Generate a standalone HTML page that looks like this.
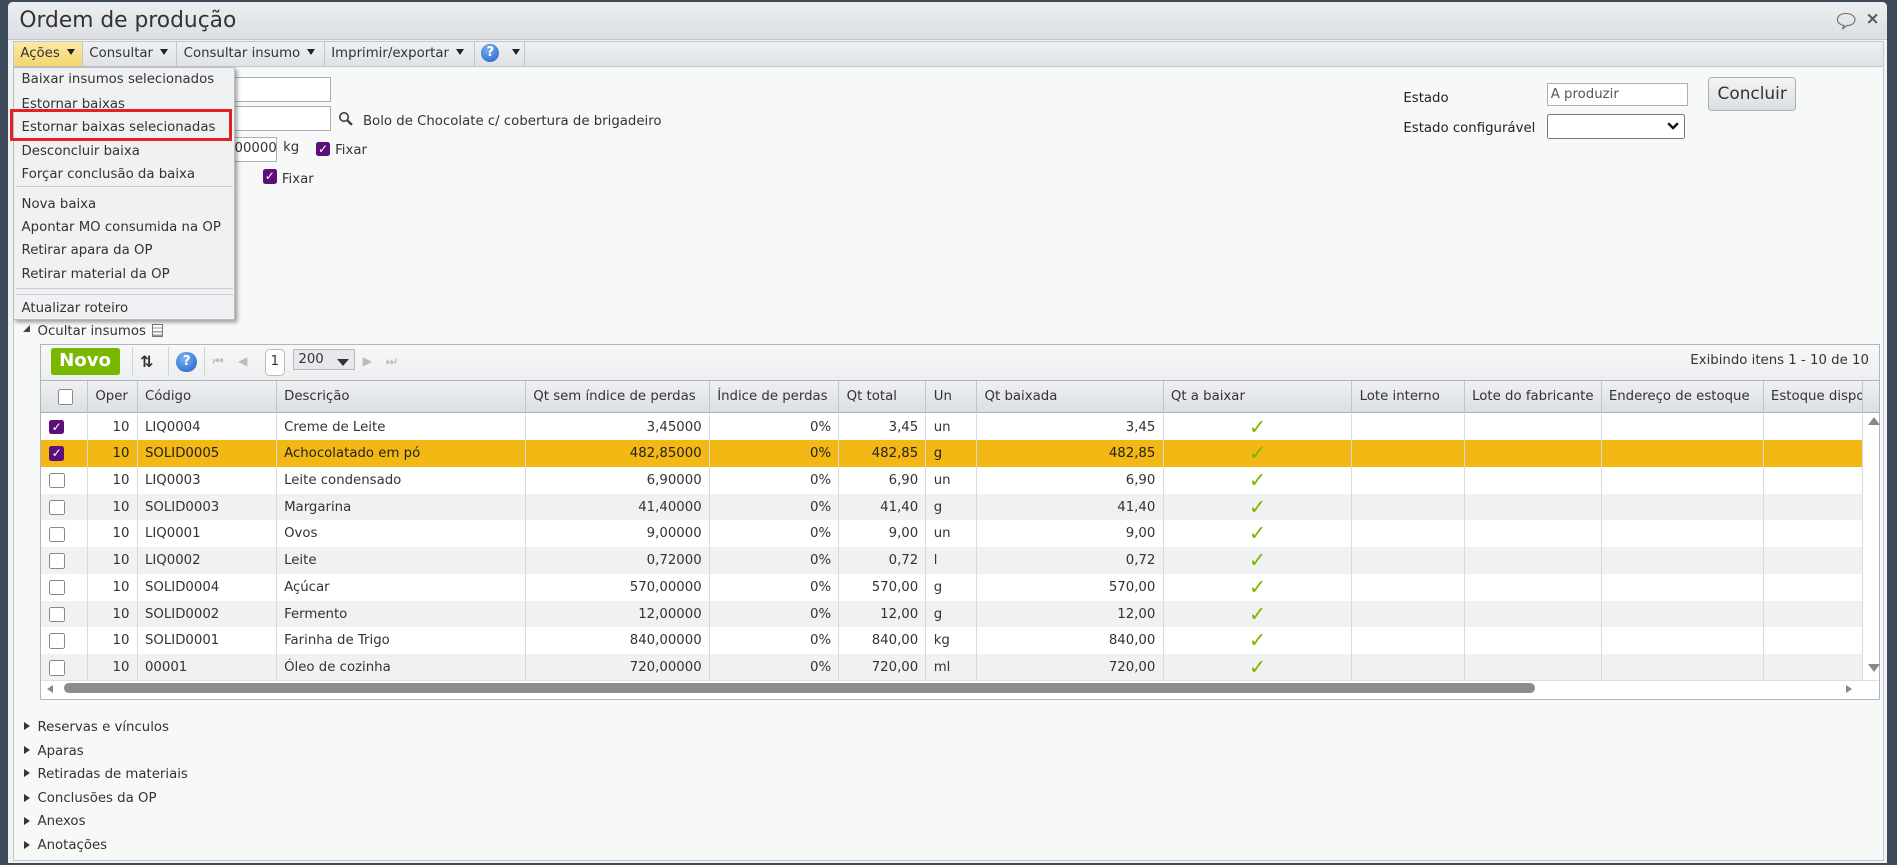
<!DOCTYPE html>
<html><head><meta charset="utf-8">
<style>
html,body{margin:0;padding:0;overflow:hidden}
body{width:1568px;height:715px;zoom:1.2098;background:#3d4a5a;font-family:"DejaVu Sans","Liberation Sans",sans-serif;font-size:11px;color:#333;position:relative}
.a{position:absolute}
#win{left:7px;top:2px;width:1553px;height:711px;background:#f1f2f4;border-radius:4px 4px 0 0}
#title{left:7px;top:2px;width:1553px;height:30px;background:linear-gradient(#eceef0,#dcdfe3);border-bottom:1px solid #c5c9ce;border-radius:4px 4px 0 0}
#tb{left:11px;top:34px;width:1545px;height:20px;background:linear-gradient(#eef0f2,#dfe2e6);border:1px solid #c3c7cc}
.tbi{top:0;height:20px;line-height:20px;padding-left:5px;border-right:1px solid #c3c7cc;color:#333}
.arr{display:inline-block;width:0;height:0;border-left:4px solid transparent;border-right:4px solid transparent;border-top:5px solid #222;vertical-align:middle;margin-left:6px;margin-top:-2px}
#content{left:11px;top:56px;width:1545px;height:655px;background:#f7f8f8;border:1px solid #c3c7cc;border-top:none}
.inp{background:#fff;border:1px solid #aab0b6}
.cb{width:11px;height:11px;border:1px solid #888;border-radius:2px;background:#fff}
.cbc{width:12px;height:12px;border-radius:2px;background:#5c0f7a;color:#fff;font-size:10px;line-height:12px;text-align:center;font-weight:bold}
#menu{left:11px;top:55px;width:182px;height:208px;background:#f0f1f3;border:1px solid #b8bcc2;box-shadow:2px 2px 3px rgba(0,0,0,.35)}
.mi{left:6px;color:#333}
.sep{left:1px;width:180px;height:1px;background:#c9ccd0}
#grid{left:33px;top:284px;width:1519px;height:293px;background:#fff;border:1px solid #b0b5bb}
#gtb{left:0;top:0;width:1519px;height:29px;background:linear-gradient(#f7f8f9,#eceef0);border-bottom:1px solid #b0b5bb}
#ghd{left:0;top:30px;width:1506px;height:26px;background:linear-gradient(#eef0f2,#dcdfe3);border-bottom:1px solid #aab0b6}
.hc{top:0;height:26px;line-height:26px;border-right:1px solid #c2c6cb;padding-left:6px;box-sizing:border-box;white-space:nowrap;overflow:hidden}
.row{left:0;width:1506px;height:22px}
.c{top:0;height:22px;line-height:23px;border-right:1px solid #d8dadd;box-sizing:border-box;padding:0 6px;white-space:nowrap;overflow:hidden}
.r{text-align:right}
.chk{color:#7ab800;font-size:17px;text-align:center;font-weight:bold}
.sec{left:31px}
.tri{left:20px;width:0;height:0;border-top:4px solid transparent;border-bottom:4px solid transparent;border-left:5px solid #333}
</style></head><body>
<div class="a" id="win"></div>
<div class="a" id="title"><div class="a" style="left:9px;top:5px;font-size:18px;color:#333">Ordem de produção</div>
<svg class="a" style="left:1510px;top:7px" width="18" height="16" viewBox="0 0 18 16"><path d="M9 2C5 2 2 4.2 2 7s2.5 4.6 5.5 5l-1.5 3 4-3c4 0 6.5-2.2 6.5-5S13 2 9 2z" fill="none" stroke="#777" stroke-width="1"/></svg>
<div class="a" style="left:1535px;top:5px;font-size:14px;font-weight:bold;color:#555">×</div></div>
<div class="a" id="tb">
<div class="a tbi" style="left:0;width:51px;background:linear-gradient(#fbe9a6,#f5d66c)">Ações<span class="arr"></span></div>
<div class="a tbi" style="left:57px;width:72px">Consultar<span class="arr"></span></div>
<div class="a tbi" style="left:135px;width:116px">Consultar insumo<span class="arr"></span></div>
<div class="a tbi" style="left:257px;width:118px">Imprimir/exportar<span class="arr"></span></div>
<div class="a tbi" style="left:381px;width:35px"><span style="display:inline-block;width:15px;height:15px;border-radius:50%;background:radial-gradient(circle at 40% 30%,#7ab3f0,#1c5fc4);color:#fff;font-weight:bold;text-align:center;line-height:15px;font-size:11px;vertical-align:middle">?</span><span class="arr" style="margin-left:10px"></span></div>
</div>
<div class="a" id="content"></div>
<div class="a inp" style="left:193px;top:64px;width:79px;height:19px"></div>
<div class="a inp" style="left:193px;top:88px;width:79px;height:19px"></div>
<svg class="a" style="left:279px;top:92px" width="13" height="13" viewBox="0 0 13 13"><circle cx="5" cy="5" r="3.5" fill="none" stroke="#444" stroke-width="1.4"/><path d="M7.5 7.5l4 4" stroke="#444" stroke-width="2"/></svg>
<div class="a" style="left:300px;top:94px">Bolo de Chocolate c/ cobertura de brigadeiro</div>
<div class="a inp" style="left:193px;top:113px;width:34px;height:19px;line-height:19px;text-align:right;overflow:hidden">00000</div>
<div class="a" style="left:234px;top:116px">kg</div>
<div class="a cbc" style="left:261px;top:117px">✓</div><div class="a" style="left:277px;top:118px">Fixar</div>
<div class="a cbc" style="left:217px;top:140px">✓</div><div class="a" style="left:233px;top:142px">Fixar</div>
<div class="a" style="left:1160px;top:75px;color:#222">Estado</div>
<div class="a inp" style="left:1279px;top:69px;width:116px;height:19px;line-height:19px;padding-left:2px;box-sizing:border-box;color:#555">A produzir</div>
<div class="a" style="left:1412px;top:64px;width:71px;height:26px;border:1px solid #aab0b6;border-radius:3px;background:linear-gradient(#f2f3f4,#dcdfe2);font-size:14px;line-height:25px;text-align:center;color:#333">Concluir</div>
<div class="a" style="left:1160px;top:100px;color:#222">Estado configurável</div>
<div class="a" style="left:1279px;top:94px;width:112px;height:19px;background:#fff;border:1px solid #777;border-radius:2px"><svg class="a" style="left:98px;top:6px" width="10" height="7"><path d="M1 1l4 4 4-4" fill="none" stroke="#111" stroke-width="2"/></svg></div>
<div class="a" style="left:19px;top:269px;width:0;height:0;border-left:6px solid transparent;border-bottom:6px solid #444"></div>
<div class="a" style="left:31px;top:268px">Ocultar insumos</div>
<div class="a" style="left:126px;top:268px;width:7px;height:9px;border:1px solid #777;background:repeating-linear-gradient(#fff 0 2px,#999 2px 3px)"></div>
<div class="a" id="grid">
<div class="a" id="gtb">
<div class="a" style="left:8px;top:3px;width:57px;height:22px;background:#7ab800;border-radius:2px;color:#fff;font-weight:bold;font-size:15px;line-height:22px;text-align:center">Novo</div>
<div class="a" style="left:75px;top:2px;width:1px;height:25px;background:#d0d3d7"></div>
<div class="a" style="left:82px;top:6px;font-size:13px;font-weight:bold">⇅</div>
<div class="a" style="left:105px;top:2px;width:1px;height:25px;background:#d0d3d7"></div>
<div class="a" style="left:112px;top:6px;width:17px;height:17px;border-radius:50%;background:radial-gradient(circle at 40% 30%,#7ab3f0,#1c5fc4);color:#fff;font-weight:bold;text-align:center;line-height:17px">?</div>
<div class="a" style="left:135px;top:2px;width:1px;height:25px;background:#d0d3d7"></div>
<div class="a" style="left:142px;top:8px;color:#bbb;font-size:10px">⏮</div>
<div class="a" style="left:163px;top:8px;color:#bbb;font-size:10px">◀</div>
<div class="a" style="left:185px;top:4px;width:15px;height:20px;border:1px solid #bbb;border-radius:4px;background:#fff;text-align:center;line-height:20px">1</div>
<div class="a" style="left:208px;top:4px;width:52px;height:17px;border:1px solid #bbb;background:#e6e8eb;line-height:17px;padding-left:4px;box-sizing:border-box">200<span class="a" style="left:36px;top:7px;border-left:5px solid transparent;border-right:5px solid transparent;border-top:6px solid #333"></span></div>
<div class="a" style="left:266px;top:8px;color:#bbb;font-size:10px">▶</div>
<div class="a" style="left:285px;top:8px;color:#bbb;font-size:10px">⏭</div>
<div class="a" style="right:8px;top:7px">Exibindo itens 1 - 10 de 10</div>
</div>
<div class="a" id="ghd">
<div class="a hc" style="left:0;width:39px"><div class="cb" style="margin:7px 0 0 8px"></div></div>
<div class="a hc" style="left:39px;width:41px">Oper</div>
<div class="a hc" style="left:80px;width:115px">Código</div>
<div class="a hc" style="left:195px;width:206px">Descrição</div>
<div class="a hc" style="left:401px;width:152px">Qt sem índice de perdas</div>
<div class="a hc" style="left:553px;width:107px">Índice de perdas</div>
<div class="a hc" style="left:660px;width:72px">Qt total</div>
<div class="a hc" style="left:732px;width:42px">Un</div>
<div class="a hc" style="left:774px;width:154px">Qt baixada</div>
<div class="a hc" style="left:928px;width:156px">Qt a baixar</div>
<div class="a hc" style="left:1084px;width:93px">Lote interno</div>
<div class="a hc" style="left:1177px;width:113px">Lote do fabricante</div>
<div class="a hc" style="left:1290px;width:134px">Endereço de estoque</div>
<div class="a hc" style="left:1424px;width:82px">Estoque disponível</div>
</div>
<div class="a" style="left:1506px;top:30px;width:13px;height:26px;background:linear-gradient(#eef0f2,#dcdfe3);border-bottom:1px solid #aab0b6"></div>
<div id="rows"></div>
<div class="a" style="left:1510px;top:60px;border-left:5px solid transparent;border-right:5px solid transparent;border-bottom:7px solid #888"></div>
<div class="a" style="left:1510px;top:264px;border-left:5px solid transparent;border-right:5px solid transparent;border-top:7px solid #888"></div>
<div class="a" style="left:0;top:277px;width:1519px;height:15px;background:#fff;border-top:1px solid #ddd"></div>
<div class="a" style="left:5px;top:281px;border-top:4px solid transparent;border-bottom:4px solid transparent;border-right:5px solid #888"></div>
<div class="a" style="left:19px;top:280px;width:1216px;height:8px;border-radius:4px;background:#8c8c8c"></div>
<div class="a" style="left:1492px;top:281px;border-top:4px solid transparent;border-bottom:4px solid transparent;border-left:5px solid #888"></div>
</div>
<div class="a" id="menu">
<div class="a mi" style="top:4px">Baixar insumos selecionados</div>
<div class="a mi" style="top:24px">Estornar baixas</div>
<div class="a mi" style="top:43px">Estornar baixas selecionadas</div>
<div class="a mi" style="top:63px">Desconcluir baixa</div>
<div class="a mi" style="top:82px">Forçar conclusão da baixa</div>
<div class="a sep" style="top:98px"></div>
<div class="a mi" style="top:107px">Nova baixa</div>
<div class="a mi" style="top:126px">Apontar MO consumida na OP</div>
<div class="a mi" style="top:145px">Retirar apara da OP</div>
<div class="a mi" style="top:165px">Retirar material da OP</div>
<div class="a sep" style="top:182px"></div>
<div class="a sep" style="top:187px"></div>
<div class="a mi" style="top:193px">Atualizar roteiro</div>
</div>
<div class="a" style="left:8px;top:90px;width:179px;height:22px;border:3px solid #e32222"></div>
<div class="a tri" style="top:597px"></div><div class="a sec" style="top:595px">Reservas e vínculos</div>
<div class="a tri" style="top:617px"></div><div class="a sec" style="top:615px">Aparas</div>
<div class="a tri" style="top:636px"></div><div class="a sec" style="top:634px">Retiradas de materiais</div>
<div class="a tri" style="top:656px"></div><div class="a sec" style="top:654px">Conclusões da OP</div>
<div class="a tri" style="top:675px"></div><div class="a sec" style="top:673px">Anexos</div>
<div class="a tri" style="top:695px"></div><div class="a sec" style="top:693px">Anotações</div>
<script>
var d=[["LIQ0004","Creme de Leite","3,45000","3,45","un","3,45",1],
["SOLID0005","Achocolatado em pó","482,85000","482,85","g","482,85",2],
["LIQ0003","Leite condensado","6,90000","6,90","un","6,90",0],
["SOLID0003","Margarina","41,40000","41,40","g","41,40",0],
["LIQ0001","Ovos","9,00000","9,00","un","9,00",0],
["LIQ0002","Leite","0,72000","0,72","l","0,72",0],
["SOLID0004","Açúcar","570,00000","570,00","g","570,00",0],
["SOLID0002","Fermento","12,00000","12,00","g","12,00",0],
["SOLID0001","Farinha de Trigo","840,00000","840,00","kg","840,00",0],
["00001","Óleo de cozinha","720,00000","720,00","ml","720,00",0]];
var h="";
d.forEach(function(r,i){
var bg=r[6]==2?"#f3b814":(i%2?"#f0f1f3":"#fff");
var cb=r[6]?'<div class="cbc" style="margin:5px 0 0 7px">✓</div>':'<div class="cb" style="margin:5px 0 0 7px"></div>';
var col=r[6]==2?"#222":"#333";
h+='<div class="a row" style="top:'+(57+i*22.1)+'px;background:'+bg+';color:'+col+'">'+
'<div class="a c" style="left:0;width:39px;padding:0">'+cb+'</div>'+
'<div class="a c r" style="left:39px;width:41px">10</div>'+
'<div class="a c" style="left:80px;width:115px">'+r[0]+'</div>'+
'<div class="a c" style="left:195px;width:206px">'+r[1]+'</div>'+
'<div class="a c r" style="left:401px;width:152px">'+r[2]+'</div>'+
'<div class="a c r" style="left:553px;width:107px">0%</div>'+
'<div class="a c r" style="left:660px;width:72px">'+r[3]+'</div>'+
'<div class="a c" style="left:732px;width:42px">'+r[4]+'</div>'+
'<div class="a c r" style="left:774px;width:154px">'+r[5]+'</div>'+
'<div class="a c chk" style="left:928px;width:156px">✓</div>'+
'<div class="a c" style="left:1084px;width:93px"></div>'+
'<div class="a c" style="left:1177px;width:113px"></div>'+
'<div class="a c" style="left:1290px;width:134px"></div>'+
'<div class="a c" style="left:1424px;width:82px"></div></div>';});
document.getElementById("rows").outerHTML=h;
</script>
</body></html>
